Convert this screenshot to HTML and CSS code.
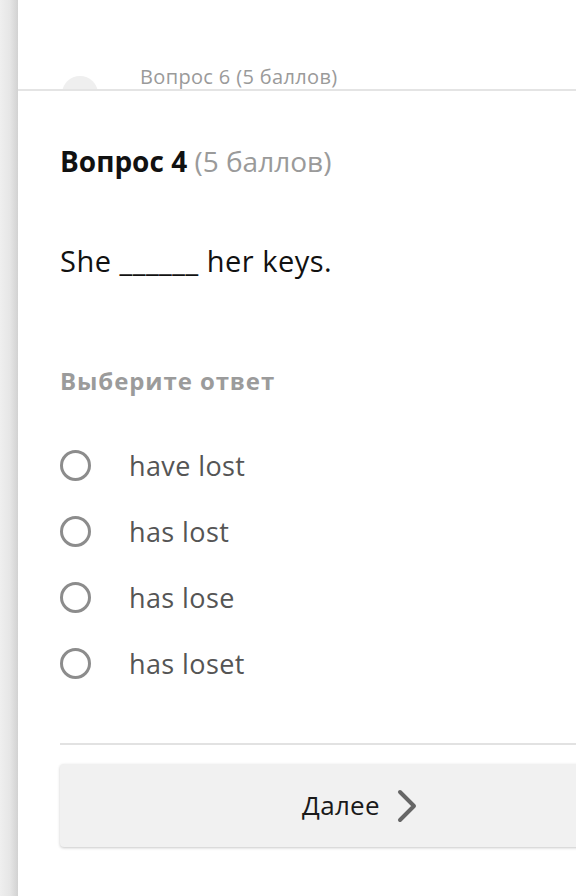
FILE: index.html
```html
<!DOCTYPE html>
<html lang="ru">
<head>
<meta charset="utf-8">
<title>Вопрос 4</title>
<link rel="stylesheet" href="styles.css">
</head>
<body>
<div class="page">
  <div class="rail"></div>
  <main class="main">
    <header class="prev">
      <span class="prev-dot"></span>
      <span class="prev-title">Вопрос 6 (5 баллов)</span>
    </header>
    <section class="question">
      <h1 class="q-title"><b>Вопрос 4</b> <span class="q-points">(5 баллов)</span></h1>
      <p class="q-text">She ______ her keys.</p>
      <h2 class="q-hint">Выберите ответ</h2>
      <ul class="options">
        <li class="option"><span class="radio"></span><span class="label">have lost</span></li>
        <li class="option"><span class="radio"></span><span class="label">has lost</span></li>
        <li class="option"><span class="radio"></span><span class="label">has lose</span></li>
        <li class="option"><span class="radio"></span><span class="label">has loset</span></li>
      </ul>
      <hr class="divider">
      <button class="next" type="button">
        <span>Далее</span>
        <svg class="chev" width="22" height="36" viewBox="0 0 22 36" aria-hidden="true">
          <path d="M4 4 L18 18 L4 32" fill="none" stroke="#666" stroke-width="4" stroke-linecap="round" stroke-linejoin="round"/>
        </svg>
      </button>
    </section>
  </main>
</div>
</body>
</html>
```

FILE: styles.css
```css
html, body {
  margin: 0;
  padding: 0;
  background: #fff;
  overflow: hidden;
}

body {
  font-family: "Open Sans", "Noto Sans", "DejaVu Sans", sans-serif;
  color: #111;
}

.page {
  display: flex;
  width: 576px;
  height: 896px;
  overflow: hidden;
}

.rail {
  flex: 0 0 18px;
  background: linear-gradient(to right, #efefef 0%, #e6e6e6 55%, #d2d2d2 100%);
}

.main {
  flex: 1 0 auto;
  min-width: 0;
  background: #fff;
}

.prev {
  height: 89px;
  border-bottom: 2px solid #e4e4e4;
  overflow: hidden;
  display: flex;
  align-items: flex-start;
}

.prev-dot {
  width: 36px;
  height: 36px;
  border-radius: 50%;
  background: #efefef;
  margin: 76px 0 0 44px;
  flex: none;
}

.prev-title {
  margin: 63px 0 0 42px;
  font-size: 20px;
  line-height: 28px;
  letter-spacing: 0.35px;
  color: #9a9a9a;
}

.question {
  padding: 51px 0 0 42px;
  width: 600px;
}

.q-title {
  margin: 0;
  font-size: 28px;
  line-height: 38px;
  font-weight: 400;
  color: #111;
}

.q-title b {
  font-weight: 700;
}

.q-points {
  color: #9a9a9a;
}

.q-text {
  margin: 62px 0 0;
  font-size: 29px;
  line-height: 38px;
  letter-spacing: 0.5px;
  color: #111;
}

.q-hint {
  margin: 85px 0 0;
  font-size: 24px;
  line-height: 32px;
  letter-spacing: 0.9px;
  font-weight: 700;
  color: #9b9b9b;
}

.options {
  list-style: none;
  margin: 35px 0 0;
  padding: 0;
}

.option {
  height: 66px;
  display: flex;
  align-items: center;
}

.radio {
  width: 25px;
  height: 25px;
  border: 3.5px solid #8c8c8c;
  border-radius: 50%;
  flex: none;
}

.label {
  margin-left: 38px;
  font-size: 27px;
  line-height: 36px;
  letter-spacing: 0.4px;
  color: #555;
  position: relative;
  top: 1px;
}

.divider {
  margin: 47px 0 0;
  border: 0;
  height: 2px;
  background: #e2e2e2;
}

.next {
  margin-top: 19px;
  width: 600px;
  height: 83px;
  background: #f1f1f1;
  border: 0;
  border-radius: 4px;
  box-shadow: 0 1px 3px rgba(0, 0, 0, 0.22);
  display: flex;
  align-items: center;
  justify-content: center;
  gap: 16px;
  font-family: "Open Sans", "Noto Sans", "DejaVu Sans", sans-serif;
  font-size: 26px;
  letter-spacing: 0.3px;
  color: #1a1a1a;
  padding: 0;
}

.next span {
  position: relative;
  top: -1px;
}

.chev {
  display: block;
}
```
